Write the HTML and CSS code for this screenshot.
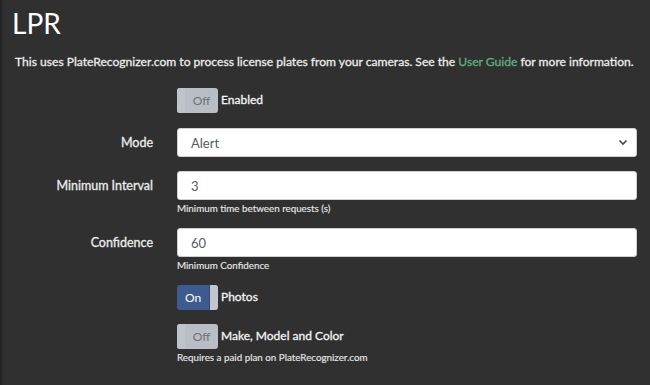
FILE: index.html
```html
<!DOCTYPE html>
<html lang="en">
<head>
    <meta charset="UTF-8">
    <meta name="viewport" content="width=device-width, initial-scale=1.0">
    <title>LPR</title>
    <link rel="stylesheet" href="styles.css">
</head>
<body>
    <div class="page">
        <h1>LPR</h1>
        <p class="intro">This uses PlateRecognizer.com to process license plates from your cameras. See the <a href="#">User Guide</a> for more information.</p>

        <form class="settings">
            <div class="form-row first-row">
                <div class="form-label"></div>
                <div class="form-field switch-field">
                    <span class="toggle off"><span class="toggle-handle"></span><span class="toggle-text">Off</span></span>
                    <span class="switch-label">Enabled</span>
                </div>
            </div>

            <div class="form-row">
                <label class="form-label" for="mode">Mode</label>
                <div class="form-field">
                    <div class="select-box">
                        <span>Alert</span>
                        <svg width="10" height="7" viewBox="0 0 10 7"><path d="M1.5 1.5 L5 5 L8.5 1.5" fill="none" stroke="#444" stroke-width="1.6"/></svg>
                    </div>
                </div>
            </div>

            <div class="form-row">
                <label class="form-label" for="interval">Minimum Interval</label>
                <div class="form-field">
                    <input type="text" id="interval" value="3">
                </div>
            </div>
            <div class="form-row help-row">
                <div class="form-label"></div>
                <div class="help">Minimum time between requests (s)</div>
            </div>

            <div class="form-row">
                <label class="form-label" for="confidence">Confidence</label>
                <div class="form-field">
                    <input type="text" id="confidence" value="60">
                </div>
            </div>
            <div class="form-row help-row">
                <div class="form-label"></div>
                <div class="help">Minimum Confidence</div>
            </div>

            <div class="form-row">
                <div class="form-label"></div>
                <div class="form-field switch-field">
                    <span class="toggle on"><span class="toggle-text">On</span><span class="toggle-handle"></span></span>
                    <span class="switch-label">Photos</span>
                </div>
            </div>

            <div class="form-row">
                <div class="form-label"></div>
                <div class="form-field switch-field">
                    <span class="toggle off"><span class="toggle-handle"></span><span class="toggle-text">Off</span></span>
                    <span class="switch-label">Make, Model and Color</span>
                </div>
            </div>
            <div class="form-row help-row">
                <div class="form-label"></div>
                <div class="help">Requires a paid plan on PlateRecognizer.com</div>
            </div>
        </form>
    </div>
</body>
</html>
```

FILE: styles.css
```css
body, html {
    margin: 0;
    padding: 0;
    height: 100%;
    font-family: Lato, "Open Sans", Arial, sans-serif;
    background-color: #303030;
    color: #eeeeee;
}

.page {
    min-height: 100%;
    box-sizing: border-box;
    border-left: 2px solid #252525;
    padding: 0 13px 0 10px;
}

h1 {
    margin: 0;
    padding-top: 6px;
    font-size: 28px;
    font-weight: 400;
    line-height: 34px;
    color: #ffffff;
}

.intro {
    margin: 13px 0 0 3px;
    font-size: 12.1px;
    font-weight: 400;
    line-height: 18px;
    color: #ececec;
    -webkit-text-stroke: 0.3px #ececec;
    white-space: nowrap;
}

.intro a {
    color: #5fae80;
    -webkit-text-stroke: 0.3px #5fae80;
    text-decoration: none;
}

.settings {
    margin-top: 17px;
}

.form-row {
    display: grid;
    grid-template-columns: 155px 1fr;
    column-gap: 10px;
    align-items: center;
    margin-bottom: 14px;
}

.form-row.first-row {
    margin-bottom: 15px;
}

.form-row.help-row {
    margin-top: -12px;
    margin-bottom: 14px;
}

.form-label {
    text-align: right;
    font-size: 12.5px;
    font-weight: 400;
    color: #ececec;
    -webkit-text-stroke: 0.3px #ececec;
    padding-right: 14px;
}

.switch-field {
    display: flex;
    align-items: center;
    gap: 3px;
}

.switch-label {
    font-size: 12px;
    font-weight: 400;
    color: #f4f4f4;
    -webkit-text-stroke: 0.3px #f4f4f4;
    margin-top: -3px;
}

.toggle {
    display: inline-flex;
    width: 41px;
    height: 25px;
    border-radius: 3px;
    overflow: hidden;
    box-sizing: border-box;
    font-size: 12px;
}

.toggle.off {
    background-color: #b9bdc6;
    color: #6d717a;
}

.toggle.on {
    background-color: #3d5b8f;
    color: #ffffff;
}

.toggle-text {
    flex: 1;
    display: flex;
    align-items: center;
    justify-content: center;
}

.toggle-handle {
    width: 8px;
    background-color: #c2c6ce;
}

.toggle.off .toggle-handle {
    background-color: #bfc3cb;
}

.toggle.on .toggle-handle {
    border-left: 1px solid #2f4a78;
}

.select-box, input[type="text"] {
    display: flex;
    align-items: center;
    justify-content: space-between;
    box-sizing: border-box;
    width: 100%;
    height: 29px;
    padding: 0 8px 0 13px;
    border: 1px solid #d0d0d0;
    border-radius: 3px;
    background-color: #ffffff;
    color: #555b62;
    font-family: Lato, "Open Sans", Arial, sans-serif;
    font-size: 13px;
}

.help {
    font-size: 9.8px;
    font-weight: 400;
    line-height: 12px;
    color: #e6e6e6;
    -webkit-text-stroke: 0.15px #e6e6e6;
}
```
